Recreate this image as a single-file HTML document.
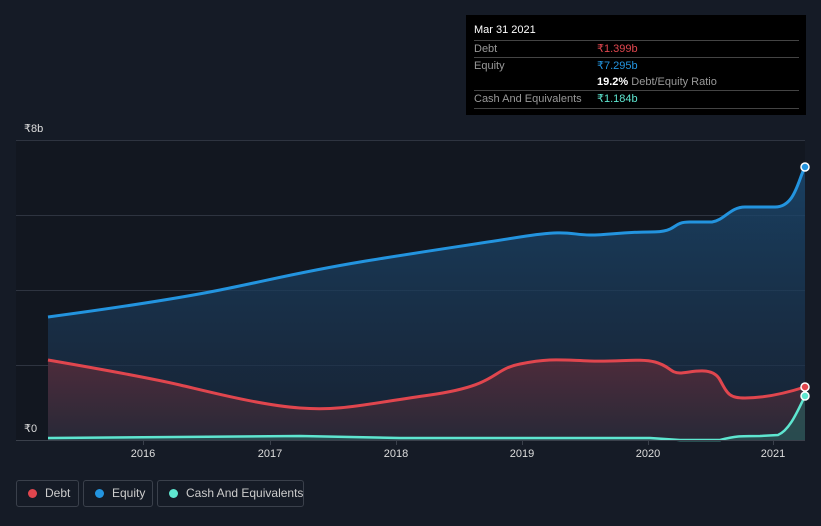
<!DOCTYPE html>
<html><head><meta charset="utf-8"><style>
body{margin:0;width:821px;height:526px;background:#151b26;font-family:"Liberation Sans",sans-serif;overflow:hidden;position:relative}
.tt{position:absolute;left:466px;top:15px;width:340px;height:100px;background:#000;color:#ddd;font-size:11px}
.row{position:absolute;left:8px;width:325px;border-top:1px solid #444;height:17px;line-height:17px;color:#999;white-space:nowrap}
.row span{position:absolute;left:123px}
.lg{position:absolute;top:480px;height:27px;border:1px solid #3a404b;border-radius:3px;color:#ccc;font-size:12px;line-height:25px;box-sizing:border-box;white-space:nowrap}
.lg i{position:absolute;left:11px;top:8px;width:9px;height:9px;border-radius:50%}
</style></head><body>
<svg width="821" height="526" style="position:absolute;left:0;top:0">
<defs>
<linearGradient id="eq" x1="0" y1="0" x2="0" y2="1"><stop offset="0" stop-color="#1b4a72" stop-opacity=".8"/><stop offset="1" stop-color="#1a2a40" stop-opacity=".6"/></linearGradient>
<linearGradient id="db" x1="0" y1="0" x2="0" y2="1"><stop offset="0" stop-color="#5a2c3a" stop-opacity=".8"/><stop offset="1" stop-color="#2c2a38" stop-opacity=".8"/></linearGradient>
</defs>
<rect x="16" y="140" width="789" height="300" fill="#121720"/>
<g stroke="#2e3440" stroke-width="1"><line x1="16" y1="140.5" x2="805" y2="140.5"/><line x1="16" y1="215.5" x2="805" y2="215.5"/><line x1="16" y1="290.5" x2="805" y2="290.5"/><line x1="16" y1="365.5" x2="805" y2="365.5"/></g>
<path d="M48,317 C100,310 170,300 220,290 S300,272 360,262 S470,245 520,237 S570,235 590,235 S620,232 650,232 S670,222 690,222 L712,222 C725,220 730,207 745,207 L775,207 C795,207 798,180 805,167 L805,440 L48,440Z" fill="url(#eq)"/>
<path d="M48,360 C100,369 150,378 180,385 S260,405 300,408 S360,405 430,395 S490,370 520,364 S560,360 590,361 S640,358 655,362 S670,373 680,373 S712,365 720,380 S730,398 745,398 S780,395 805,387 L805,440 L48,440Z" fill="url(#db)"/>
<path d="M48,317 C100,310 170,300 220,290 S300,272 360,262 S470,245 520,237 S570,235 590,235 S620,232 650,232 S670,222 690,222 L712,222 C725,220 730,207 745,207 L775,207 C795,207 798,180 805,167" fill="none" stroke="#2394df" stroke-width="3"/>
<path d="M48,360 C100,369 150,378 180,385 S260,405 300,408 S360,405 430,395 S490,370 520,364 S560,360 590,361 S640,358 655,362 S670,373 680,373 S712,365 720,380 S730,398 745,398 S780,395 805,387" fill="none" stroke="#e0464e" stroke-width="3"/>
<path d="M48,438 L300,436 L400,438 L650,438 L680,440 L720,440 C735,436 740,436 760,436 L778,435 C790,430 798,410 805,396 L805,440 L48,440Z" fill="#2a5a5a" opacity=".7"/>
<path d="M48,438 L300,436 L400,438 L650,438 L680,440 L720,440 C735,436 740,436 760,436 L778,435 C790,430 798,410 805,396" fill="none" stroke="#5ee6d0" stroke-width="2.5"/>
<line x1="16" y1="440.5" x2="805" y2="440.5" stroke="#3a404b"/>
<g stroke="#3a404b"><line x1="143.5" y1="441" x2="143.5" y2="445"/><line x1="270.5" y1="441" x2="270.5" y2="445"/><line x1="396.5" y1="441" x2="396.5" y2="445"/><line x1="522.5" y1="441" x2="522.5" y2="445"/><line x1="648.5" y1="441" x2="648.5" y2="445"/><line x1="773.5" y1="441" x2="773.5" y2="445"/></g>
<circle cx="805" cy="167" r="4" fill="#2394df" stroke="#fff" stroke-width="1.5"/>
<circle cx="805" cy="387" r="4" fill="#e0464e" stroke="#fff" stroke-width="1.5"/>
<circle cx="805" cy="396" r="4" fill="#5ee6d0" stroke="#fff" stroke-width="1.5"/>
<g fill="#ddd" font-size="11" font-family="Liberation Sans,sans-serif" text-anchor="middle">
<text x="143" y="457">2016</text><text x="270" y="457">2017</text><text x="396" y="457">2018</text><text x="522" y="457">2019</text><text x="648" y="457">2020</text><text x="773" y="457">2021</text></g>
<text x="24" y="132" fill="#ddd" font-size="11">₹8b</text>
<text x="24" y="432" fill="#ddd" font-size="11">₹0</text>
</svg>
<div class="tt">
<div style="position:absolute;left:8px;top:9px;color:#fff;font-size:11px">Mar 31 2021</div>
<div class="row" style="top:25px">Debt<span style="color:#e0464e">₹1.399b</span></div>
<div class="row" style="top:42px">Equity<span style="color:#2394df">₹7.295b</span></div>
<div class="row" style="top:59px;border:0"><span style="color:#fff"><b>19.2%</b> <span style="position:static;color:#999">Debt/Equity Ratio</span></span></div>
<div class="row" style="top:75px;border-bottom:1px solid #444">Cash And Equivalents<span style="color:#5ee6d0">₹1.184b</span></div>
</div>
<div class="lg" style="left:16px;width:63px"><i style="background:#e0464e"></i><span style="position:absolute;left:28px">Debt</span></div>
<div class="lg" style="left:83px;width:70px"><i style="background:#2394df"></i><span style="position:absolute;left:28px">Equity</span></div>
<div class="lg" style="left:157px;width:147px"><i style="background:#5ee6d0"></i><span style="position:absolute;left:28px">Cash And Equivalents</span></div>
</body></html>
